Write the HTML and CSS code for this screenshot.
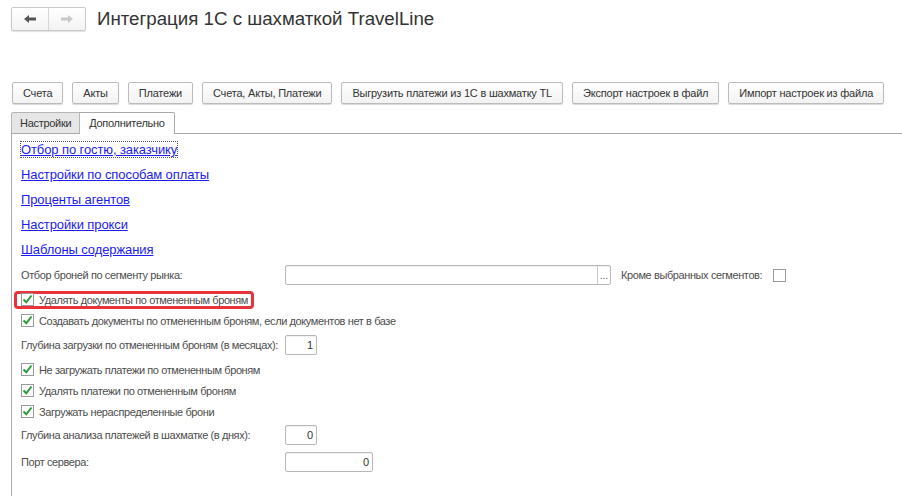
FILE: index.html
```html
<!DOCTYPE html>
<html>
<head>
  <meta charset="utf-8">
  <title>Интеграция 1С с шахматкой TravelLine</title>
  <link rel="stylesheet" href="styles.css">
</head>
<body>
  <div class="header">
    <div class="nav">
      <span class="nav-btn">
        <svg width="14" height="10" viewBox="0 0 14 10"><path d="M1 5 L6 1 L6 3.5 L13 3.5 L13 6.5 L6 6.5 L6 9 Z" fill="#555"/></svg>
      </span>
      <span class="nav-btn">
        <svg width="14" height="10" viewBox="0 0 14 10"><path d="M13 5 L8 1 L8 3.5 L1 3.5 L1 6.5 L8 6.5 L8 9 Z" fill="#c8c8c8"/></svg>
      </span>
    </div>
    <h1 class="title">Интеграция 1С с шахматкой TravelLine</h1>
  </div>

  <div class="toolbar">
    <button class="btn">Счета</button>
    <button class="btn">Акты</button>
    <button class="btn">Платежи</button>
    <button class="btn">Счета, Акты, Платежи</button>
    <button class="btn">Выгрузить платежи из 1С в шахматку TL</button>
    <button class="btn">Экспорт настроек в файл</button>
    <button class="btn">Импорт настроек из файла</button>
  </div>

  <div class="tabs">
    <span class="tab">Настройки</span>
    <span class="tab tab-active">Дополнительно</span>
  </div>

  <div class="panel">
    <div class="links">
      <a href="#" class="link link-focus">Отбор по гостю, заказчику</a>
      <a href="#" class="link">Настройки по способам оплаты</a>
      <a href="#" class="link">Проценты агентов</a>
      <a href="#" class="link">Настройки прокси</a>
      <a href="#" class="link">Шаблоны содержания</a>
    </div>

    <div class="row row-field row-first">
      <span class="label">Отбор броней по сегменту рынка:</span>
      <span class="input input-select"><span class="select-btn">...</span></span>
      <span class="label-side">Кроме выбранных сегментов:</span>
      <span class="check"></span>
    </div>

    <div class="row row-check mt3">
      <span class="highlight">
        <span class="check"><svg width="11" height="11" viewBox="0 0 11 11"><path d="M1.5 5.5 L4.3 8.3 L9.5 1.5" fill="none" stroke="#2b9a3b" stroke-width="2"/></svg></span>
        Удалять документы по отмененным броням
      </span>
    </div>
    <div class="row row-check">
      <span class="check"><svg width="11" height="11" viewBox="0 0 11 11"><path d="M1.5 5.5 L4.3 8.3 L9.5 1.5" fill="none" stroke="#2b9a3b" stroke-width="2"/></svg></span>
      Создавать документы по отмененным броням, если документов нет в базе
    </div>

    <div class="row row-field mt2">
      <span class="label">Глубина загрузки по отмененным броням (в месяцах):</span>
      <span class="input input-small">1</span>
    </div>

    <div class="row row-check mt2">
      <span class="check"><svg width="11" height="11" viewBox="0 0 11 11"><path d="M1.5 5.5 L4.3 8.3 L9.5 1.5" fill="none" stroke="#2b9a3b" stroke-width="2"/></svg></span>
      Не загружать платежи по отмененным броням
    </div>
    <div class="row row-check">
      <span class="check"><svg width="11" height="11" viewBox="0 0 11 11"><path d="M1.5 5.5 L4.3 8.3 L9.5 1.5" fill="none" stroke="#2b9a3b" stroke-width="2"/></svg></span>
      Удалять платежи по отмененным броням
    </div>
    <div class="row row-check">
      <span class="check"><svg width="11" height="11" viewBox="0 0 11 11"><path d="M1.5 5.5 L4.3 8.3 L9.5 1.5" fill="none" stroke="#2b9a3b" stroke-width="2"/></svg></span>
      Загружать нераспределенные брони
    </div>

    <div class="row row-field mt1">
      <span class="label">Глубина анализа платежей в шахматке (в днях):</span>
      <span class="input input-small">0</span>
    </div>
    <div class="row row-field mt3">
      <span class="label">Порт сервера:</span>
      <span class="input input-port">0</span>
    </div>
  </div>
</body>
</html>
```

FILE: styles.css
```css
body {
  margin: 0;
  font-family: "Liberation Sans", Arial, sans-serif;
  color: #4d4d4d;
  background: #fff;
  height: 496px;
  overflow: hidden;
}
.header {
  display: flex;
  align-items: center;
  padding: 7px 0 0 11px;
}
.nav {
  display: flex;
  border: 1px solid #c9c9c9;
  border-radius: 2px;
  box-shadow: 0 1px 1px rgba(0, 0, 0, 0.12);
  background: linear-gradient(#fff, #f3f3f3);
}
.nav-btn {
  width: 36px;
  height: 22px;
  display: flex;
  align-items: center;
  justify-content: center;
}
.nav-btn + .nav-btn {
  border-left: 1px solid #d5d5d5;
}
.title {
  margin: 0 0 0 11px;
  font-size: 18.7px;
  font-weight: normal;
  color: #333;
  line-height: 22px;
}
.toolbar {
  display: flex;
  gap: 9px;
  margin-top: 51px;
  padding-left: 12px;
}
.btn {
  flex-shrink: 0;
  white-space: nowrap;
  height: 22px;
  padding: 0 10px;
  font-family: inherit;
  font-size: 11px;
  letter-spacing: -0.2px;
  color: #333;
  background: linear-gradient(#fff, #f2f2f2);
  border: 1px solid #bcbcbc;
  border-radius: 2px;
  box-shadow: 0 1px 1px rgba(0, 0, 0, 0.15);
}
.tabs {
  display: flex;
  margin: 8px 0 0 11px;
  border-bottom: 1px solid #a9a9a9;
  height: 21px;
}
.tab {
  font-size: 11px;
  letter-spacing: -0.3px;
  color: #333;
  padding: 0 8px;
  line-height: 20px;
  background: #e6e6e6;
  border: 1px solid #b5b5b5;
  border-bottom: none;
  border-radius: 2px 0 0 0;
}
.tab-active {
  background: #fff;
  border-color: #a9a9a9;
  border-left: none;
  border-radius: 0 2px 0 0;
  height: 21px;
  padding: 0 9px;
}
.panel {
  box-sizing: border-box;
  margin-left: 11px;
  border-left: 1px solid #a9a9a9;
  padding: 3px 0 0 9px;
  height: 364px;
  font-size: 11px;
  letter-spacing: -0.4px;
}
.links {
  display: flex;
  flex-direction: column;
  align-items: flex-start;
  letter-spacing: -0.1px;
}
.link {
  font-size: 13px;
  color: #1c1cf0;
  line-height: 25px;
}
.link-focus {
  outline: 1px dotted #555;
  line-height: 15px;
  margin: 5px 0;
}
.row {
  display: flex;
  align-items: center;
}
.row-field {
  height: 24px;
}
.row-first {
  height: 22px;
  margin-top: 2px;
}
.row-check {
  height: 21px;
  gap: 5px;
}
.mt1 { margin-top: 1px; }
.mt2 { margin-top: 2px; }
.mt3 { margin-top: 3px; }
.label {
  width: 264px;
  flex-shrink: 0;
}
.label-side {
  margin-left: 10px;
  margin-right: 11px;
}
.input {
  height: 18px;
  border: 1px solid #b8b8b8;
  border-radius: 2px;
  box-shadow: inset 0 1px 1px rgba(0, 0, 0, 0.06);
  display: flex;
  align-items: center;
  justify-content: flex-end;
  padding: 0 3px;
  color: #333;
  letter-spacing: 0;
  box-sizing: content-box;
}
.input-select {
  width: 324px;
  padding: 0;
}
.select-btn {
  width: 12px;
  height: 18px;
  border-left: 1px solid #c8c8c8;
  font-size: 10px;
  line-height: 20px;
  text-align: center;
  color: #555;
}
.input-small {
  width: 24px;
}
.input-port {
  width: 80px;
}
.check {
  width: 11px;
  height: 11px;
  border: 1px solid #9a9a9a;
  background: #fff;
  display: inline-flex;
  align-items: center;
  justify-content: center;
  flex-shrink: 0;
}
.highlight {
  display: inline-flex;
  align-items: center;
  gap: 5px;
  margin-left: -7px;
  padding: 0 3px 0 4px;
  height: 12px;
  border: 3px solid #e8333c;
  border-radius: 4px;
}
```
